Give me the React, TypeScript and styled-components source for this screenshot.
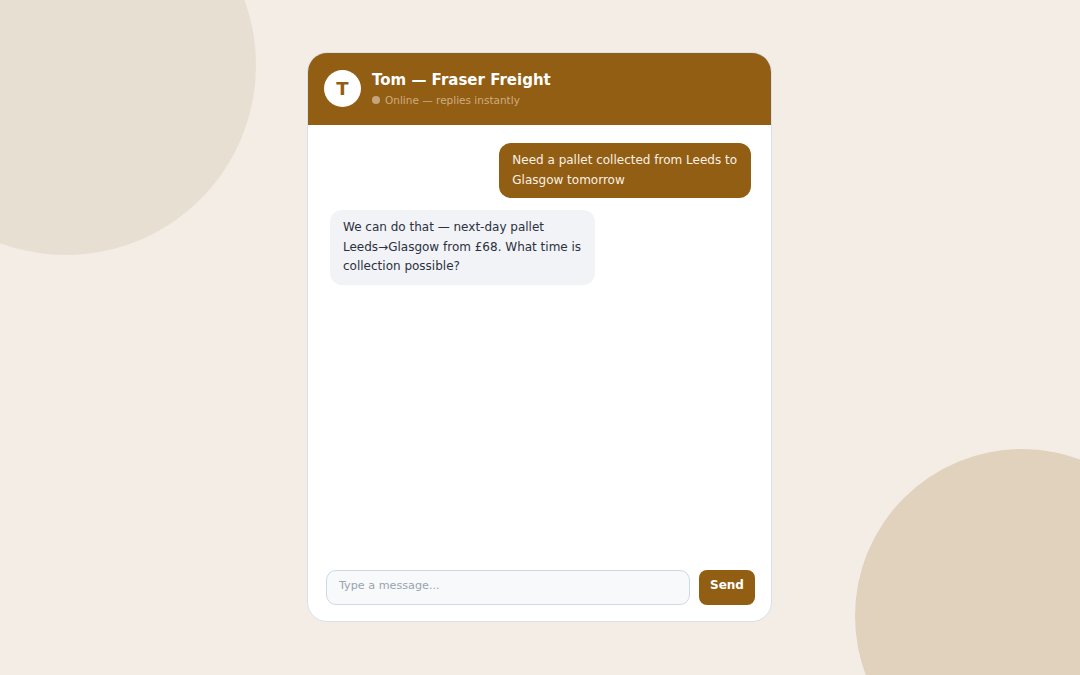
import React from "react";
import styled, { createGlobalStyle } from "styled-components";

const GlobalStyle = createGlobalStyle`
  html, body {
    margin: 0;
    padding: 0;
    height: 100%;
  }
  body {
    background: #f4ede6;
    font-family: "DejaVu Sans", "Noto Sans", sans-serif;
    overflow: hidden;
  }
  #root {
    height: 100%;
  }
  * { box-sizing: border-box; }
`;

const Page = styled.div`
  position: relative;
  height: 100vh;
  display: flex;
  align-items: flex-start;
  justify-content: center;
  padding: 52px 1px 0 0;
  overflow: hidden;
`;

const Blob = styled.div<{ $size: number; $color: string }>`
  position: absolute;
  width: ${(p) => p.$size}px;
  height: ${(p) => p.$size}px;
  border-radius: 50%;
  background: ${(p) => p.$color};
  z-index: 0;
`;

const BlobTopLeft = styled(Blob)`
  left: -124px;
  top: -125px;
`;

const BlobBottomRight = styled(Blob)`
  left: 855px;
  top: 449px;
`;

const Card = styled.div`
  position: relative;
  z-index: 1;
  width: 465px;
  height: 570px;
  background: #ffffff;
  border: 1px solid #d9e1ec;
  border-radius: 20px;
  overflow: hidden;
  display: flex;
  flex-direction: column;
`;

const Header = styled.header`
  display: flex;
  align-items: center;
  gap: 11px;
  height: 73px;
  padding: 0 15px 0 17px;
  background: #925e14;
  flex-shrink: 0;
  margin: -1px -1px 0;
`;

const Avatar = styled.div`
  width: 37px;
  height: 37px;
  border-radius: 50%;
  background: #ffffff;
  color: #925e14;
  font-weight: 700;
  font-size: 18px;
  display: flex;
  align-items: center;
  justify-content: center;
`;

const HeaderText = styled.div`
  display: flex;
  flex-direction: column;
  gap: 3px;
  padding-top: 1px;
`;

const Title = styled.div`
  color: #ffffff;
  font-weight: 700;
  font-size: 15px;
  line-height: 19px;
`;

const Status = styled.div`
  color: #cfac7f;
  font-size: 10.5px;
  line-height: 14px;
  display: flex;
  align-items: center;
  gap: 5px;
`;

const Dot = styled.span`
  width: 8px;
  height: 8px;
  border-radius: 50%;
  background: #c6a57c;
  display: inline-block;
`;

const Messages = styled.div`
  flex: 1;
  display: flex;
  flex-direction: column;
  gap: 12px;
  padding: 18px 20px 18px 22px;
`;

const Bubble = styled.div<{ $mine?: boolean }>`
  max-width: 75%;
  align-self: ${(p) => (p.$mine ? "flex-end" : "flex-start")};
  background: ${(p) => (p.$mine ? "#925e14" : "#f2f3f7")};
  color: ${(p) => (p.$mine ? "#fbf1e4" : "#2b3140")};
  font-size: 12px;
  line-height: 19.5px;
  padding: 8px 14px 8px 13px;
  border-radius: 12px;
`;

const Composer = styled.form`
  display: flex;
  gap: 9px;
  padding: 0 16px 16px 18px;
`;

const Input = styled.input`
  flex: 1;
  height: 35px;
  border: 1px solid #cdd8e6;
  border-radius: 10px;
  background: #f7f9fb;
  padding: 0 12px 4px;
  font-family: inherit;
  font-size: 11.2px;
  color: #2b3140;
  outline: none;
  &::placeholder {
    color: #9aa3b1;
  }
`;

const SendButton = styled.button`
  width: 56px;
  height: 35px;
  border: none;
  border-radius: 8px;
  background: #925e14;
  color: #ffffff;
  font-family: inherit;
  font-weight: 700;
  font-size: 12px;
  padding: 0 0 6px;
  cursor: pointer;
`;

type Message = { mine: boolean; lines: string[] };

const messages: Message[] = [
  { mine: true, lines: ["Need a pallet collected from Leeds to", "Glasgow tomorrow"] },
  {
    mine: false,
    lines: ["We can do that — next-day pallet", "Leeds→Glasgow from £68. What time is", "collection possible?"],
  },
];

export default function App() {
  return (
    <>
      <GlobalStyle />
      <Page>
        <BlobTopLeft $size={380} $color="#e8dfd3" />
        <BlobBottomRight $size={334} $color="#e0d2bd" />
        <Card>
          <Header>
            <Avatar>T</Avatar>
            <HeaderText>
              <Title>Tom — Fraser Freight</Title>
              <Status>
                <Dot />
                Online — replies instantly
              </Status>
            </HeaderText>
          </Header>
          <Messages>
            {messages.map((m, i) => (
              <Bubble key={i} $mine={m.mine}>
                {m.lines.map((line, j) => (
                  <React.Fragment key={j}>
                    {j > 0 && <br />}
                    {line}
                  </React.Fragment>
                ))}
              </Bubble>
            ))}
          </Messages>
          <Composer onSubmit={(e) => e.preventDefault()}>
            <Input placeholder="Type a message..." />
            <SendButton type="submit">Send</SendButton>
          </Composer>
        </Card>
      </Page>
    </>
  );
}
